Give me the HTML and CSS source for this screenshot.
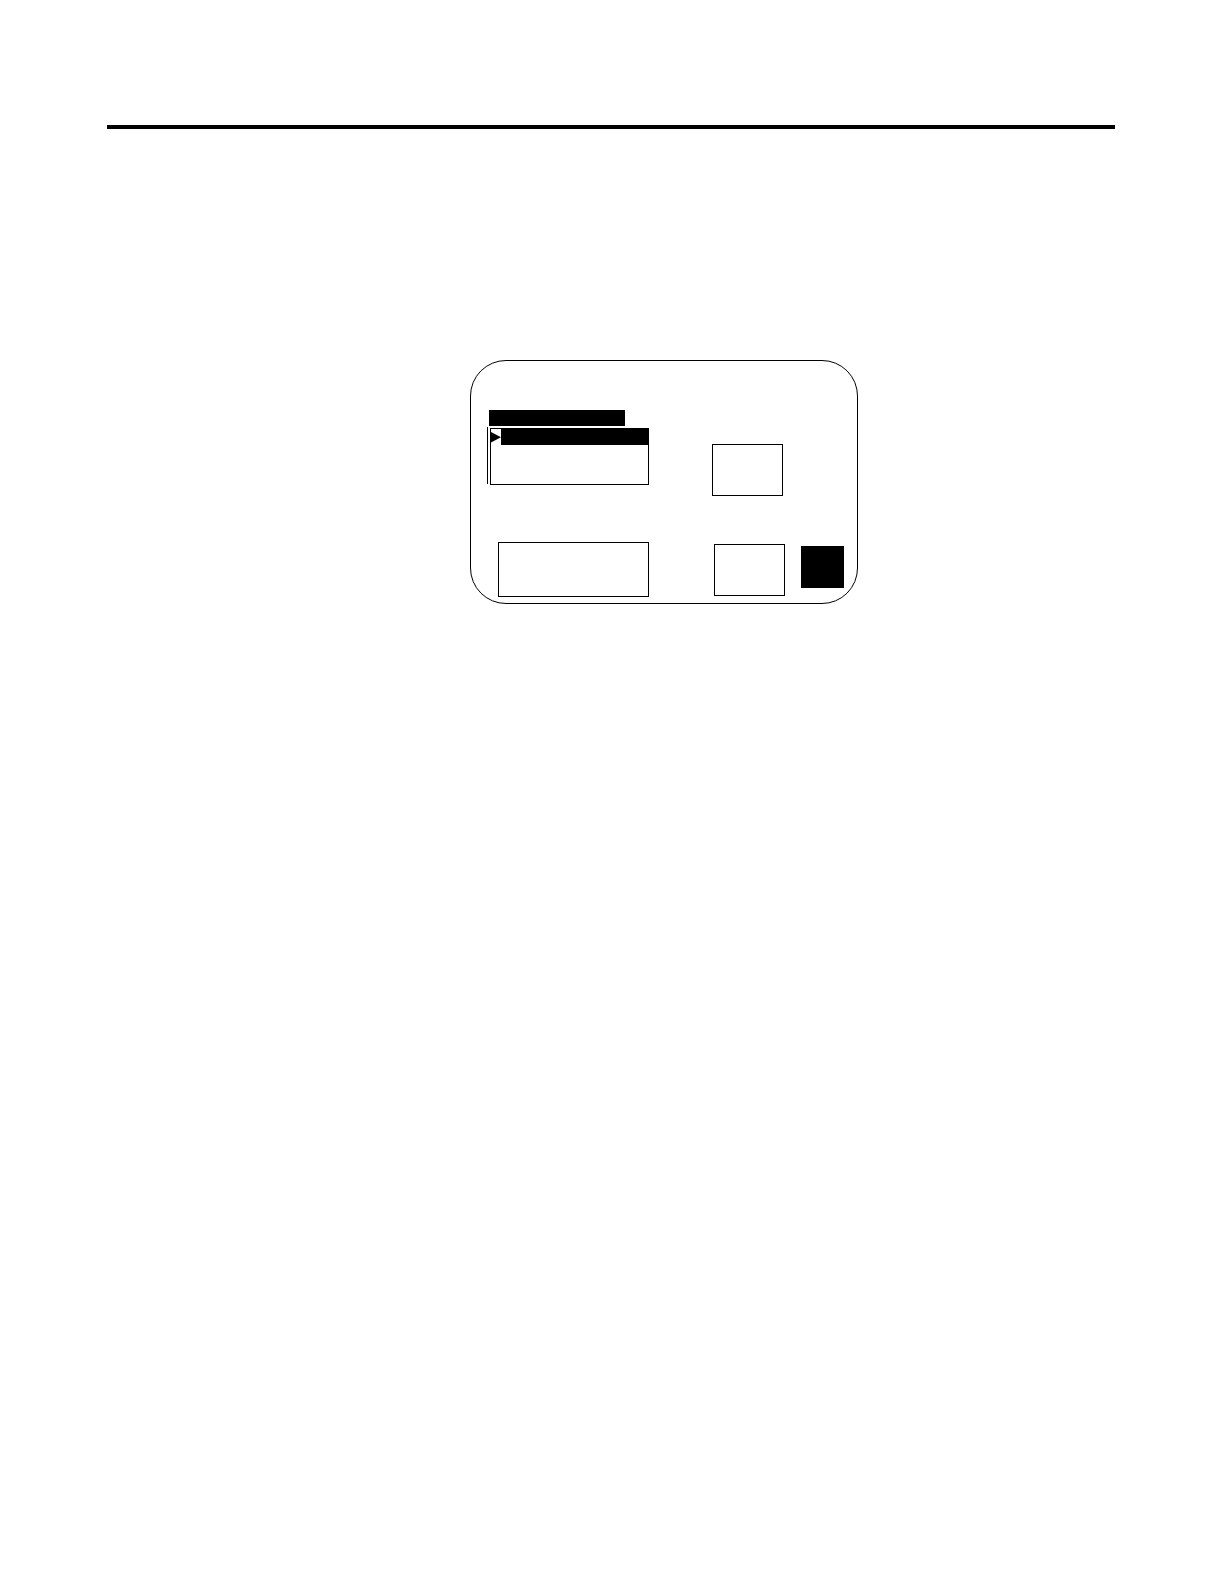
FILE: index.html
```html
<!DOCTYPE html>
<html lang="en">
<head>
<meta charset="UTF-8">
<meta name="viewport" content="width=device-width, initial-scale=1.0">
<link rel="stylesheet" href="styles.css">
<title>Terminal Screen</title>
</head>
<body>
<div class="page">
    <hr class="rule">
    <main class="content">
        <div class="screen">
            <div class="row">
                <div class="menu">
                    <div class="menu-title"></div>
                    <div class="menu-body">
                        <div class="scroll-line"></div>
                        <ul class="list">
                            <li class="item selected">
                                <svg class="cursor" viewBox="0 0 10 16" aria-hidden="true">
                                    <path d="M0 3 L10 8.300 L0 13.400 Z" fill="#000"/>
                                </svg>
                                <span class="highlight"></span>
                            </li>
                        </ul>
                    </div>
                </div>
                <div class="box"></div>
            </div>
            <div class="row row-bottom">
                <div class="box box-wide"></div>
                <div class="keys">
                    <div class="box"></div>
                    <div class="key"></div>
                </div>
            </div>
        </div>
    </main>
</div>
</body>
</html>
```

FILE: styles.css
```css
body {
    margin: 0;
    min-height: 100vh;
    font-family: "Liberation Sans", Arial, sans-serif;
    background: #fff;
    color: #000;
}

.page {
    padding: 125px 109px 60px 107px;
}

.rule {
    height: 4px;
    margin: 0;
    border: none;
    background: #000;
}

.content {
    display: flex;
    justify-content: center;
    padding: 231px 0 0 106px;
}

/* terminal outline */
.screen {
    padding: 49px 13px 6px 16px;
    border: 1px solid #000;
    border-radius: 36px;
}

.row {
    display: flex;
    align-items: flex-end;
    gap: 63px;
}

.row-bottom {
    align-items: flex-start;
    gap: 65px;
    margin-top: 46px;
    padding-left: 11px;
}

/* menu list with the title bar above it */
.menu {
    padding-bottom: 11px;
}

.menu-title {
    width: 136px;
    height: 16px;
    margin: 0 0 1px 2px;
    background: #000;
}

.menu-body {
    display: flex;
    gap: 2px;
}

.scroll-line {
    width: 1px;
    height: 57px;
    background: #000;
}

.list {
    box-sizing: border-box;
    width: 159px;
    height: 57px;
    margin: 1px 0 0;
    padding: 0;
    border: 1px solid #000;
    list-style: none;
}

.item {
    display: flex;
    height: 16px;
}

.cursor {
    width: 10px;
    height: 16px;
}

.highlight {
    flex: 1;
    background: #000;
}

.box {
    box-sizing: border-box;
    width: 71px;
    height: 52px;
    border: 1px solid #000;
}

.box-wide {
    width: 151px;
    height: 55px;
}

.keys {
    display: flex;
    gap: 16px;
    padding-top: 2px;
}

.key {
    width: 43px;
    height: 42px;
    margin-top: 2px;
    background: #000;
}
```
